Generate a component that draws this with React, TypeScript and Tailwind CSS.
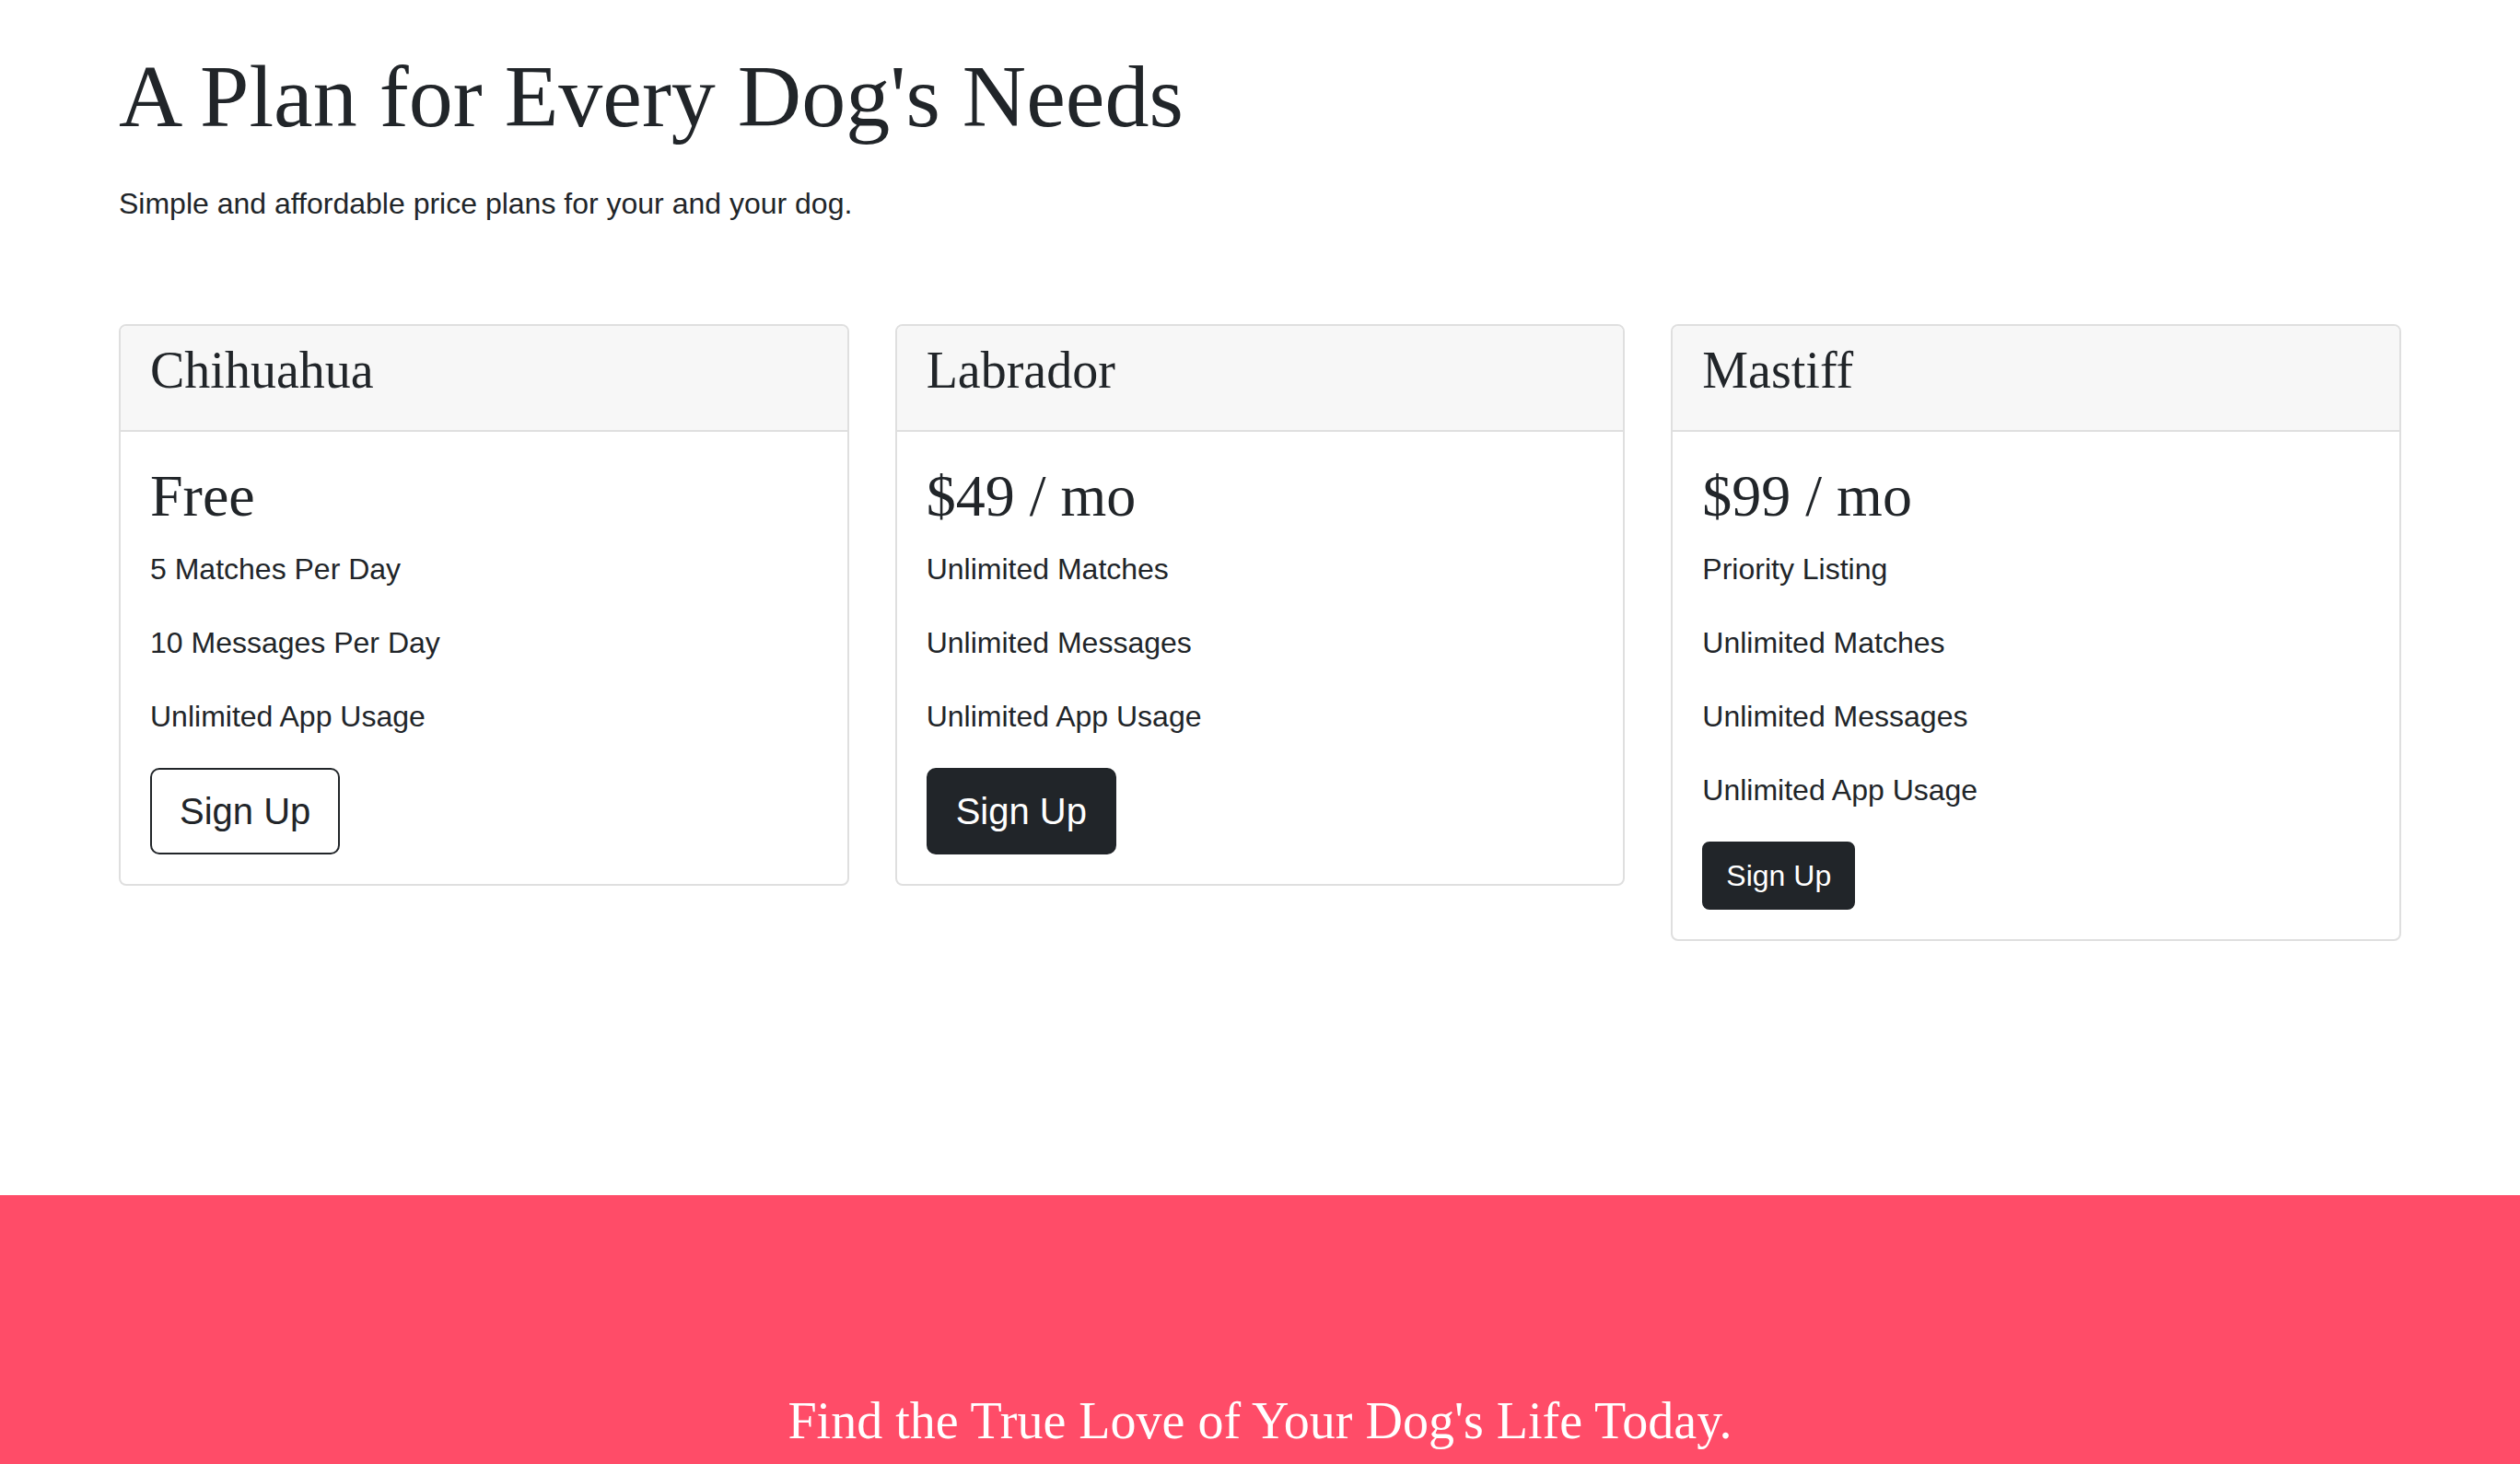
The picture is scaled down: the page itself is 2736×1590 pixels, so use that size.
import React from "react";

const serif = "font-['Liberation_Serif','Times_New_Roman',serif]";
const sans = "font-['Liberation_Sans',Arial,sans-serif]";

type Plan = {
  name: string;
  price: string;
  items: string[];
  btn: "outline" | "dark" | "small";
};

const plans: Plan[] = [
  {
    name: "Chihuahua",
    price: "Free",
    items: ["5 Matches Per Day", "10 Messages Per Day", "Unlimited App Usage"],
    btn: "outline",
  },
  {
    name: "Labrador",
    price: "$49 / mo",
    items: ["Unlimited Matches", "Unlimited Messages", "Unlimited App Usage"],
    btn: "dark",
  },
  {
    name: "Mastiff",
    price: "$99 / mo",
    items: ["Priority Listing", "Unlimited Matches", "Unlimited Messages", "Unlimited App Usage"],
    btn: "small",
  },
];

const SignUp = ({ kind }: { kind: Plan["btn"] }) => {
  if (kind === "small") {
    return (
      <button className="border-2 border-[#212529] bg-[#212529] text-white text-[32px] leading-[1.5] px-[24px] py-[11px] rounded-[8px]">
        Sign Up
      </button>
    );
  }
  return (
    <button
      className={
        "border-2 border-[#212529] text-[40px] leading-[1.5] px-[30px] py-[15px] rounded-[10px] " +
        (kind === "dark" ? "bg-[#212529] text-white" : "bg-white text-[#212529]")
      }>
      Sign Up
    </button>
  );
};

const PlanCard = ({ plan }: { plan: Plan }) => (
  <div className="border-2 border-[#dfdfdf] rounded-[8px] overflow-hidden bg-white">
    <div className="bg-[#f7f7f7] border-b-2 border-[#dfdfdf] px-[32px] py-[15px]">
      <h3 className={serif + " text-[56px] leading-[1.2] mb-[16px] text-[#212529]"}>{plan.name}</h3>
    </div>
    <div className="p-[32px]">
      <h2 className={serif + " text-[64px] leading-[1.2] mb-[16px] text-[#212529]"}>{plan.price}</h2>
      {plan.items.map(item => (
        <p key={item} className="text-[32px] leading-[1.5] mb-[32px] text-[#212529]">
          {item}
        </p>
      ))}
      <SignUp kind={plan.btn} />
    </div>
  </div>
);

export default function App() {
  return (
    <div className={sans + " bg-white text-[#212529] min-h-screen"}>
      <section className="px-[129px] pt-[33px] pb-[276px]">
        <h2 className={serif + " text-[96px] leading-[144px]"}>A Plan for Every Dog's Needs</h2>
        <p className="text-[32px] leading-[48px] mt-[20px]">
          Simple and affordable price plans for your and your dog.
        </p>
        <div className="grid grid-cols-3 gap-[50px] items-start mt-[107px]">
          {plans.map(p => (
            <PlanCard key={p.name} plan={p} />
          ))}
        </div>
      </section>
      <section className="bg-[#ff4c68] pt-[203px] pb-[192px] text-center">
        <h3 className={serif + " text-[56px] leading-[84px] text-white"}>
          Find the True Love of Your Dog's Life Today.
        </h3>
      </section>
    </div>
  );
}
